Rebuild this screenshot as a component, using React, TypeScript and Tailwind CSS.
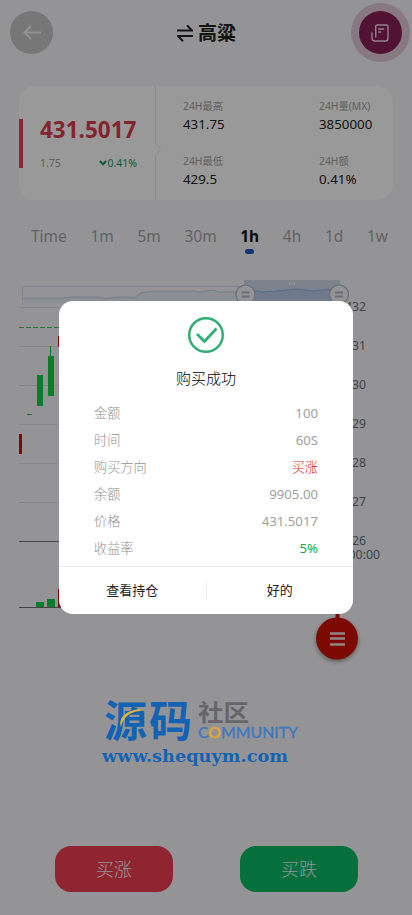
import React from 'react';

interface Stat {
  label: string;
  value: string;
}

interface OrderRow {
  label: string;
  value: string;
  color?: string;
}

const stats: Stat[] = [
  { label: '24H最高', value: '431.75' },
  { label: '24H量(MX)', value: '3850000' },
  { label: '24H最低', value: '429.5' },
  { label: '24H额', value: '0.41%' },
];

const periods = ['Time', '1m', '5m', '30m', '1h', '4h', '1d', '1w'];

const orderRows: OrderRow[] = [
  { label: '金额', value: '100' },
  { label: '时间', value: '60S' },
  { label: '购买方向', value: '买涨', color: 'font-light text-[#d81e32]' },
  { label: '余额', value: '9905.00' },
  { label: '价格', value: '431.5017' },
  { label: '收益率', value: '5%', color: 'text-[#0cae58]' },
];

const Header: React.FC = () => (
  <header className="flex items-start justify-between h-[86px] pl-[10px] pr-[2px] pt-[3px]">
    <button className="w-[43px] h-[43px] mt-2 rounded-full bg-[#c6c6c6] flex items-center justify-center">
      <svg className="w-[18px] h-[15px]" viewBox="0 0 18 15" fill="none" stroke="#f4f4f4" strokeWidth={1.8}>
        <path d="M18 7.500H1.500M8 1L1.500 7.500 8 14" />
      </svg>
    </button>
    <h1 className="flex items-center gap-[5px] h-[60px] pl-[9px] text-[19px] font-bold text-[#222]">
      <svg className="w-4 h-[17px]" viewBox="0 0 16 17" fill="none" stroke="#222" strokeWidth={2}>
        <path d="M0 5.500h15L10 .3M16 11H1l5 5.200" />
      </svg>
      <span className="pt-px">高粱</span>
    </h1>
    <button className="w-[59px] h-[59px] rounded-full bg-[#e3cad8] flex items-center justify-center">
      <span className="w-[43px] h-[43px] rounded-full bg-[#871e55] flex items-center justify-center">
        <svg className="w-[18px] h-[18px]" viewBox="0 0 18 18" fill="none" stroke="#efd8e5" strokeWidth={1.4}>
          <path d="M4.700 13.500V2.500Q4.700 1 6.200 1h9Q17 1 17 2.800v11.400Q17 17 14.500 17H4Q1 17 1 14V8.500" />
          <path d="M7.200 5h6M7.200 8h3" />
        </svg>
      </span>
    </button>
  </header>
);

const PriceCard: React.FC = () => (
  <section className="mx-[19px] h-[114px] flex rounded-[16px] bg-white">
    <div className="w-[136px] flex items-center">
      <div className="w-1 h-[49px] bg-[#da4657] shrink-0" />
      <div className="w-[97px] ml-[17px]">
        <p className="text-[22.500px] leading-[30px] font-bold text-[#da3c4e] whitespace-nowrap">431.5017</p>
        <p className="mt-[10px] flex justify-between text-[10.5px] leading-4 text-[#a0a0a0]">
          <span>1.75</span>
          <span className="flex items-center text-[#1b9a59]">
            <svg className="w-2 h-[6px]" viewBox="0 0 8 6" fill="none" stroke="currentColor" strokeWidth={2}>
              <path d="M.8 1L4 4.300 7.200 1" />
            </svg>
            0.41%
          </span>
        </p>
      </div>
    </div>
    <svg className="w-[6px] h-[114px] shrink-0" viewBox="0 0 6 114" fill="none" stroke="#e6e6e8">
      <path d="M.5 0v57l5 6.500-5 6V114" />
    </svg>
    <div className="grid grid-cols-[136px_1fr] gap-y-[19px] ml-[22px] pt-[12px] content-start">
      {stats.map((stat) => (
        <div key={stat.label}>
          <p className="text-[10.3px] leading-4 text-[#a0a0a0] whitespace-nowrap">{stat.label}</p>
          <p className="text-[13.300px] leading-5 text-[#222]">{stat.value}</p>
        </div>
      ))}
    </div>
  </section>
);

const PeriodTabs: React.FC = () => (
  <nav className="flex justify-between pl-[31px] pr-[24px] mt-[24px] h-[32px] text-[15.500px] leading-6 text-[#a4a4a8]">
    {periods.map((period) => (
      <div key={period} className={period === '1h' ? 'flex flex-col items-center font-bold text-[#111]' : ''}>
        <span>{period}</span>
        {period === '1h' && <i className="w-[9px] h-[5px] mt-[1px] rounded-full bg-[#1857bd]" />}
      </div>
    ))}
  </nav>
);

const Chart: React.FC = () => (
  <svg className="block w-[412px] h-[414px]" viewBox="0 256 412 414">
    <rect x="22.500" y="286.500" width="317" height="15.500" rx="2" fill="none" stroke="#d5dbe5" />
    <path d="M23 298h40l8-1h28l6 2 12-2h12l5 1 7-5 12-2h40l5 1 15-2 6 2h26V302H23z" fill="#e8edf5" />
    <path d="M23 298h40l8-1h28l6 2 12-2h12l5 1 7-5 12-2h40l5 1 15-2 6 2h26" fill="none" stroke="#c6d2e2" />
    <rect x="244" y="280" width="96" height="7" rx="1" fill="#d2dbe8" />
    <rect x="245" y="287" width="95" height="15" fill="#ccd8ee" />
    <path d="M245 292l12-1 5 1 15-1 20-2 16 2 10-1 17-1v13h-95z" fill="#bacbeb" />
    <path d="M245 292l12-1 5 1 15-1 20-2 16 2 10-1 17-1" fill="none" stroke="#98b1df" />
    <path d="M289.500 282v3M292 282v3M294.500 282v3" stroke="#fff" />
    {[245.5, 339].map((x) => (
      <g key={x} stroke="#acb8c8">
        <circle cx={x} cy="294.500" r="9.500" fill="#f7f7fa" strokeWidth="1.200" />
        <path d={`M${x - 4} 292.500h8M${x - 4} 296.500h8`} strokeWidth="1.800" />
      </g>
    ))}

    {[307.5, 346.5, 385.5, 424.5, 463.5, 502.5].map((y) => (
      <path key={y} d={`M19 ${y}h321`} stroke="#e0e2e8" />
    ))}
    <path d="M19 541.500h321M19 607.500h321" stroke="#6e7079" />
    <path d="M19 327.500h321" stroke="#3fc04a" strokeDasharray="5 2" />

    <g fill="#0fd145">
      <rect x="27" y="414" width="5" height="1" />
      <rect x="37" y="375" width="6" height="31" />
      <rect x="48" y="356" width="6" height="40" />
      <rect x="50" y="346" width="1" height="10" />
      <rect x="36" y="602" width="8" height="5" />
      <rect x="47" y="599" width="8" height="8" />
    </g>
    <g fill="#c81010">
      <rect x="19" y="434" width="3" height="20" />
      <rect x="58" y="336" width="6" height="11" />
      <rect x="58" y="589" width="8" height="18" />
      <rect x="335.500" y="600" width="4" height="20" />
    </g>

    <g fontSize="12.300" fill="#6e7079">
      {[432, 431, 430, 429, 428, 427, 426].map((price, i) => (
        <text key={price} x="366" y={311 + i * 39} textAnchor="end">{price}</text>
      ))}
      <text x="380" y="559" textAnchor="end">00:00</text>
    </g>

    <circle cx="337" cy="638.500" r="21" fill="#d01005" className="drop-shadow-[0_2px_2px_rgba(0,0,0,0.4)]" />
    <path d="M330 633.500h15M330 638.500h15M330 644.500h15" stroke="#f4dede" strokeWidth="2.500" />
  </svg>
);

const Watermark: React.FC = () => (
  <svg className="absolute left-[98px] top-[692px] w-[206px] h-[76px]" viewBox="98 692 206 76">
    <text x="104" y="737" fontSize="43" fontWeight="700" fill="#1463b3" textLength="88">源码</text>
    <path d="M121 727c-3-9 5-17 20-18l-1 2c-10 1-17 6-19 16z" fill="#e3b33c" />
    <text x="198" y="721" fontSize="23" fontWeight="700" fill="#66666a" textLength="51" lengthAdjust="spacingAndGlyphs">社区</text>
    <text x="198" y="738" fontSize="15.500" fill="#3f78bd" stroke="#3f78bd" strokeWidth=".4" textLength="100" lengthAdjust="spacingAndGlyphs" fontFamily="Lato, sans-serif">
      C<tspan fill="#e3a92e" stroke="#e3a92e">O</tspan>MMUNITY
    </text>
    <text x="102" y="762" fontSize="17.500" fontWeight="700" fill="#1463b3" textLength="186" lengthAdjust="spacingAndGlyphs" fontFamily="'DejaVu Serif', serif">
      www.shequym.com
    </text>
  </svg>
);

const SuccessDialog: React.FC = () => (
  <div className="absolute left-[59px] top-[301px] w-[294px] h-[313px] rounded-[14px] bg-white flex flex-col">
    <svg className="w-[38px] h-[38px] mt-[15px] mx-auto" viewBox="0 0 38 38" fill="none" stroke="#32ad75" strokeWidth={2.500}>
      <circle cx="19" cy="19" r="16.800" />
      <path d="M10 18l7.500 7.500L29.500 12.500" strokeWidth={2.800} />
    </svg>
    <h2 className="mt-[12px] text-center text-[15px] leading-6 font-light text-black">购买成功</h2>
    <dl className="mt-[10px] px-[35px]">
      {orderRows.map((row) => (
        <div key={row.label} className="flex justify-between text-[13.200px] leading-[27px] text-[#a0a0a0]">
          <dt className="font-light text-[#909090]">{row.label}</dt>
          <dd className={row.color}>{row.value}</dd>
        </div>
      ))}
    </dl>
    <div className="mt-auto h-[48px] border-t border-[#ebebeb] flex items-center text-[13px] text-[#222]">
      <button className="flex-1 pt-px">查看持仓</button>
      <div className="w-px h-[17px] bg-[#ebebeb]" />
      <button className="flex-1 pt-px">好的</button>
    </div>
  </div>
);

const App: React.FC = () => {
  return (
    <div className="relative w-[412px] h-[915px] overflow-hidden bg-[#f7f7fa] font-['Noto_Sans','Noto_Sans_CJK_SC',sans-serif]">
      <Header />
      <PriceCard />
      <PeriodTabs />
      <Chart />
      <div className="flex justify-between px-[55px] mt-[176px] text-[18px] font-light text-[#f5f5f5]">
        <button className="w-[118px] h-[46px] rounded-[16px] bg-[#f03e53]">买涨</button>
        <button className="w-[118px] h-[46px] rounded-[16px] bg-[#0abb64] -mr-px">买跌</button>
      </div>
      <div className="absolute inset-0 bg-black/40" />
      <Watermark />
      <SuccessDialog />
    </div>
  );
};

export default App;
